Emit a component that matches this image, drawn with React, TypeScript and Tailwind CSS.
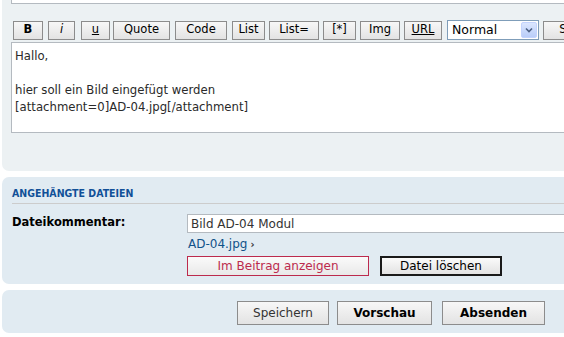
import React from 'react';

const btn =
  'h-[19px] border border-[#8c8c8c] bg-gradient-to-b from-[#f7f7f7] to-[#e3e3e3] text-[11.5px] leading-none text-black';

const bigBtn =
  'h-[24px] border border-[#8c8c8c] bg-gradient-to-b from-[#f7f7f7] to-[#e3e3e3] text-[12px] leading-none';

function SelectArrow() {
  return (
    <div className="flex h-[16px] w-[16px] items-center justify-center rounded-[2px] border border-[#c3d3fd] bg-gradient-to-b from-[#dbe6fe] to-[#b9cdf9]">
      <svg width="8" height="6" viewBox="0 0 8 6">
        <path d="M1 1.5 L4 4.5 L7 1.5" fill="none" stroke="#4d6185" strokeWidth="1.6" />
      </svg>
    </div>
  );
}

export default function App() {
  return (
    <div className="h-[337px] w-[564px] overflow-hidden bg-white font-['DejaVu_Sans',sans-serif] text-black">
      <div className="w-[780px] pl-[2px]">
        {/* Editor panel */}
        <div className="-mt-[20px] rounded-[7px] bg-[#ecf1f3] pb-[38px] pl-[9px]">
          <div className="h-[24px] border border-[#b4bac0] bg-white" />

          {/* BBCode toolbar */}
          <div className="mt-[16px] flex items-center">
            <button className={`${btn} ml-[2px] w-[30px] font-bold`}>B</button>
            <button className={`${btn} ml-[5px] w-[27px] italic`}>i</button>
            <button className={`${btn} ml-[6px] w-[29px] underline`}>u</button>
            <button className={`${btn} ml-[3px] w-[57px]`}>Quote</button>
            <button className={`${btn} ml-[5px] w-[52px]`}>Code</button>
            <button className={`${btn} ml-[5px] w-[33px]`}>List</button>
            <button className={`${btn} ml-[4px] w-[50px]`}>List=</button>
            <button className={`${btn} ml-[4px] w-[33px]`}>[*]</button>
            <button className={`${btn} ml-[4px] w-[40px]`}>Img</button>
            <button className={`${btn} ml-[4px] w-[38px] underline`}>URL</button>
            <div className="ml-[5px] flex h-[20px] w-[92px] items-center justify-between border border-[#7f9db9] bg-white pl-[4px] pr-[1px] text-[12.5px]">
              <span>Normal</span>
              <SelectArrow />
            </div>
            <button className={`${btn} ml-[4px] w-[100px]`}>Schriftfarbe</button>
          </div>

          {/* Message textarea */}
          <div className="mt-[2px] h-[91px] w-[760px] border border-[#b4bac0] bg-white px-[3px] pt-[5px] text-[11.7px] leading-[17px] text-[#2a2a2a]">
            <div>Hallo,</div>
            <div>&nbsp;</div>
            <div>hier soll ein Bild eingefügt werden</div>
            <div>[attachment=0]AD-04.jpg[/attachment]</div>
          </div>
        </div>

        {/* Attachments panel */}
        <div className="mt-[6px] rounded-[7px] bg-[#e1ebf2] px-[10px] pb-[8px] pt-[10px]">
          <h3 className="border-b border-[#cccccc] pb-[3px] font-['DejaVu_Sans_Condensed','DejaVu_Sans',sans-serif] text-[10.5px] font-bold uppercase leading-[13px] text-[#115098]">
            Angehängte Dateien
          </h3>
          <div className="mt-[10px] flex">
            <div className="w-[175px] pt-[1px] text-[11.5px] font-bold leading-[15px]">Dateikommentar:</div>
            <div className="flex-1">
              <div className="flex h-[19px] items-center border border-[#b4bac0] bg-white px-[3px] text-[12px] text-[#333]">
                Bild AD-04 Modul
              </div>
              <div className="mt-[4px] flex items-center text-[12px] leading-[15px]">
                <span className="pl-[1px] text-[#105289]">AD-04.jpg</span>
                <span className="ml-[3px] text-[10px] font-bold text-[#333]">›</span>
              </div>
              <div className="mt-[4px] flex items-center">
                <button className="h-[20px] w-[182px] border border-[#bc2a4d] bg-gradient-to-b from-[#fafafa] to-[#e9e9e9] text-[12px] leading-none text-[#bc2a4d]">
                  Im Beitrag anzeigen
                </button>
                <button className="ml-[11px] h-[20px] w-[122px] border-2 border-[#1a1a1a] bg-gradient-to-b from-[#fafafa] to-[#e3e3e3] text-[12px] leading-none text-black">
                  Datei löschen
                </button>
              </div>
            </div>
          </div>
        </div>

        {/* Submit buttons */}
        <div className="mt-[6px] flex h-[43px] items-start rounded-[7px] bg-[#e1ebf2] pl-[235px] pt-[11px]">
          <button className={`${bigBtn} w-[92px] text-[#333]`}>Speichern</button>
          <button className={`${bigBtn} ml-[8px] w-[95px] font-bold`}>Vorschau</button>
          <button className={`${bigBtn} ml-[10px] w-[103px] font-bold`}>Absenden</button>
        </div>
      </div>
    </div>
  );
}
